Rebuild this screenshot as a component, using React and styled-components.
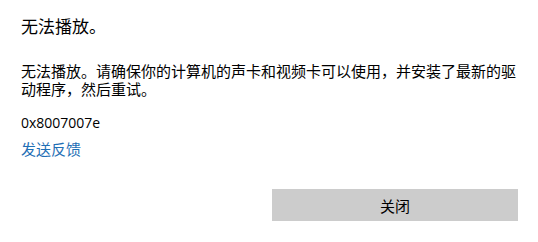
import React from "react";
import styled, { createGlobalStyle } from "styled-components";

const Global = createGlobalStyle`
  html, body { margin: 0; padding: 0; background: #ffffff; }
  body { font-family: "Noto Sans CJK SC", "Noto Sans", sans-serif; color: #000; }
`;

const Dialog = styled.div`
  width: 538px;
  height: 242px;
  box-sizing: border-box;
  padding: 14px 20px 0 21px;
  display: flex;
  flex-direction: column;
  background: #fff;
`;

const Title = styled.div`
  font-size: 17px;
  line-height: 24px;
  color: #000;
`;

const Body = styled.div`
  margin-top: 24px;
  font-size: 15px;
  line-height: 18px;
  color: #000;
`;

const Code = styled.div`
  margin-top: 15px;
  font-family: "Open Sans", "Noto Sans", sans-serif;
  font-size: 14px;
  line-height: 20px;
  color: #000;
`;

const Link = styled.a`
  margin-top: 6px;
  font-size: 15px;
  line-height: 20px;
  color: #1f6fb5;
  text-decoration: none;
  cursor: pointer;
  align-self: flex-start;
`;

const Footer = styled.div`
  margin-top: 30px;
  display: flex;
  justify-content: flex-end;
`;

const Button = styled.button`
  width: 246px;
  height: 32px;
  border: none;
  background: #cccccc;
  font-family: "Noto Sans CJK SC", sans-serif;
  font-size: 15px;
  color: #000;
  padding: 0;
  cursor: pointer;
`;

export default function App() {
  return (
    <>
      <Global />
      <Dialog>
        <Title>无法播放。</Title>
        <Body>
          无法播放。请确保你的计算机的声卡和视频卡可以使用，并安装了最新的驱动程序，然后重试。
        </Body>
        <Code>0x8007007e</Code>
        <Link>发送反馈</Link>
        <Footer>
          <Button>关闭</Button>
        </Footer>
      </Dialog>
    </>
  );
}
